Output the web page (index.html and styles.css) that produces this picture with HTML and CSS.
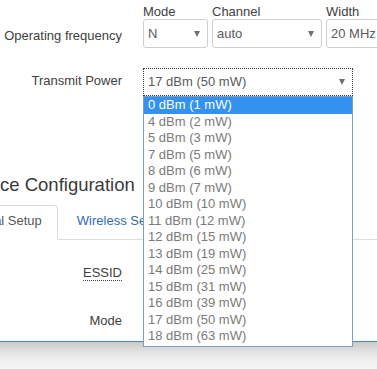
FILE: index.html
```html
<!DOCTYPE html>
<html>
<head>
<meta charset="utf-8">
<link rel="stylesheet" href="styles.css">
</head>
<body>
<div class="main">
  <div class="page">
    <div class="form-row freq">
      <div class="label">Operating frequency</div>
      <div class="controls">
        <div class="field f-mode">
          <div class="field-label">Mode</div>
          <div class="select"><span>N</span><i class="arrow"></i></div>
        </div>
        <div class="field f-channel">
          <div class="field-label">Channel</div>
          <div class="select"><span>auto</span><i class="arrow"></i></div>
        </div>
        <div class="field f-width">
          <div class="field-label">Width</div>
          <div class="select"><span>20 MHz</span><i class="arrow"></i></div>
        </div>
      </div>
    </div>

    <div class="form-row power">
      <div class="label">Transmit Power</div>
      <div class="controls power-controls">
        <div class="select focused"><span>17 dBm (50 mW)</span><i class="arrow"></i></div>
        <ul class="dropdown">
          <li class="opt selected">0 dBm (1 mW)</li>
          <li class="opt">4 dBm (2 mW)</li>
          <li class="opt">5 dBm (3 mW)</li>
          <li class="opt">7 dBm (5 mW)</li>
          <li class="opt">8 dBm (6 mW)</li>
          <li class="opt">9 dBm (7 mW)</li>
          <li class="opt">10 dBm (10 mW)</li>
          <li class="opt">11 dBm (12 mW)</li>
          <li class="opt">12 dBm (15 mW)</li>
          <li class="opt">13 dBm (19 mW)</li>
          <li class="opt">14 dBm (25 mW)</li>
          <li class="opt">15 dBm (31 mW)</li>
          <li class="opt">16 dBm (39 mW)</li>
          <li class="opt">17 dBm (50 mW)</li>
          <li class="opt">18 dBm (63 mW)</li>
        </ul>
      </div>
    </div>

    <h2 class="heading">Device Configuration</h2>

    <ul class="tabs">
      <li class="tab active">General Setup</li>
      <li class="tab"><a class="tab-link">Wireless Security</a></li>
    </ul>

    <div class="form-row opt-row">
      <div class="label"><abbr class="hint">ESSID</abbr></div>
    </div>
    <div class="form-row opt-row last">
      <div class="label">Mode</div>
    </div>
  </div>
</div>
<div class="shade"></div>
</body>
</html>
```

FILE: styles.css
```css
html, body {
  margin: 0;
  padding: 0;
  overflow: hidden;
}

body {
  width: 377px;
  height: 369px;
  background: #f4f4f4;
  font-family: "Liberation Sans", Arial, sans-serif;
  font-size: 13px;
  color: #404040;
}

.main {
  background: #fff;
  border-bottom: 1px solid #4686c6;
}

.page {
  margin-left: -60px;
  width: 437px;
}

.form-row {
  display: flex;
  align-items: flex-start;
}

.label {
  flex: none;
  width: 182px;
  text-align: right;
  line-height: 18px;
  color: #404040;
}

.controls {
  margin-left: 21px;
  display: flex;
  gap: 4px;
}

.freq .controls {
  padding-top: 5px;
}

.freq .label {
  padding-top: 27px;
}

.field-label {
  line-height: 14px;
  color: #404040;
}

.select {
  box-sizing: border-box;
  height: 29px;
  border: 1px solid #cfcfcf;
  border-radius: 3px;
  display: flex;
  align-items: center;
  justify-content: space-between;
  padding: 0 7px 0 4px;
  color: #5a5a5a;
  line-height: 18px;
  background: #fff;
}

.arrow {
  width: 0;
  height: 0;
  border-left: 3.5px solid transparent;
  border-right: 3.5px solid transparent;
  border-top: 6px solid #707070;
}

.f-mode .select { width: 65px; }
.f-channel .select { width: 110px; }
.f-width .select { width: 90px; }

.power {
  margin-top: 20px;
}

.power .label {
  padding-top: 3.5px;
}

.power-controls {
  position: relative;
}

.select.focused {
  width: 210px;
  height: 28px;
  border: 1px dotted #3a3a3a;
  border-radius: 0;
}

.dropdown {
  position: absolute;
  z-index: 10;
  top: 100%;
  left: 0;
  box-sizing: border-box;
  width: 210px;
  margin: 0;
  padding: 0 0 1px;
  list-style: none;
  background: #fff;
  border: 1px solid #7f9dbf;
}

.opt {
  height: 16.5px;
  line-height: 16.5px;
  padding-left: 4px;
  color: #7a7a7a;
  white-space: nowrap;
}

.opt.selected {
  background: #3392f0;
  color: #fff;
}

.heading {
  margin: 78px 0 0 23px;
  font-size: 18.5px;
  line-height: 22px;
  font-weight: normal;
  color: #3a3a3a;
  white-space: nowrap;
}

.tabs {
  margin: 9px 0 0;
  padding: 0 0 0 2px;
  list-style: none;
  display: flex;
  border-bottom: 1px solid #dddddd;
}

.tab {
  padding: 6px 15px 9px;
  line-height: 18px;
  border: 1px solid transparent;
  border-radius: 4px 4px 0 0;
  margin-bottom: -1px;
  white-space: nowrap;
  color: #555;
}

.tab + .tab {
  margin-left: 3px;
}

.tab.active {
  border-color: #dddddd #dddddd #fff;
  background: #fff;
}

.tab-link {
  color: #2f6bb3;
}

.opt-row {
  margin-top: 10px;
  height: 48px;
  box-sizing: border-box;
  padding-top: 14px;
}

.opt-row.last {
  margin-top: 0;
  height: 43px;
  padding-top: 13.5px;
}

.hint {
  text-decoration: none;
  border-bottom: 1px dotted #404040;
}

.shade {
  height: 28px;
  background: linear-gradient(#c9c9c9, #e6e6e6 40%, #f3f3f3 75%, #f5f5f5);
}
```
